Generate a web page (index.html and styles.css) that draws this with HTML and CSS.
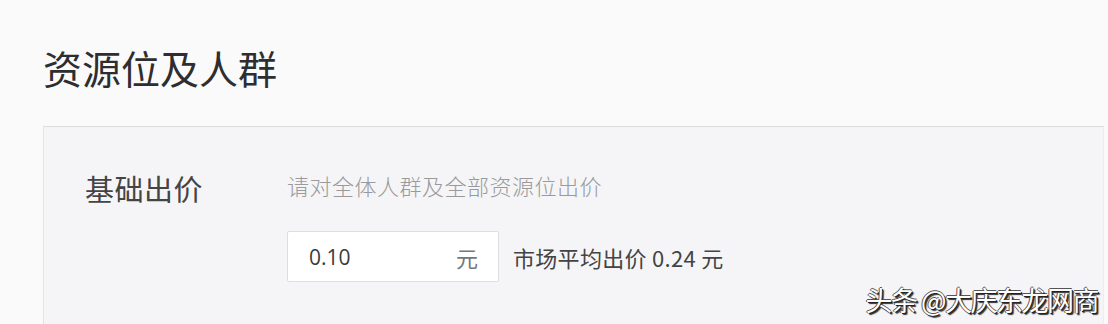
FILE: index.html
```html
<!doctype html>
<html lang="zh-CN">
<head>
    <meta charset="UTF-8">
    <title>资源位及人群</title>
    <link rel="stylesheet" href="styles.css">
</head>
<body>
    <div class="page">
        <h1 class="title">资源位及人群</h1>

        <div class="panel">
            <div class="row">
                <div class="label">基础出价</div>
                <div class="content">
                    <p class="hint">请对全体人群及全部资源位出价</p>
                    <div class="bid">
                        <div class="input">
                            <span class="value">0.10</span>
                            <span class="unit">元</span>
                        </div>
                        <span class="avg">市场平均出价 0.24 元</span>
                    </div>
                </div>
            </div>
        </div>
    </div>

    <div class="watermark">头条 @大庆东龙网商</div>
</body>
</html>
```

FILE: styles.css
```css
html, body {
    margin: 0;
    padding: 0;
    height: 100%;
    overflow: hidden;
}
body {
    background: #fbfafb;
    font-family: "Noto Sans CJK SC", "Open Sans", sans-serif;
    color: #333;
}
.page {
    padding: 0 4px 0 43px;
}
.title {
    margin: 0;
    padding-top: 41px;
    height: 126px;
    box-sizing: border-box;
    font-size: 39px;
    font-weight: 400;
    line-height: 52px;
    color: #2e2e30;
}
.panel {
    border-top: 1px solid #dcdcde;
    border-left: 1px solid #e4e4e6;
    border-right: 1px solid #ededf0;
    background: #f5f5f7;
    height: 198px;
    box-sizing: border-box;
}
.row {
    display: flex;
    padding: 40px 0 0 41px;
}
.label {
    width: 202px;
    font-size: 29px;
    line-height: 42px;
    letter-spacing: 0.5px;
    color: #444;
}
.content {
    display: flex;
    flex-direction: column;
}
.hint {
    margin: 0;
    font-size: 22px;
    font-weight: 300;
    line-height: 36px;
    color: #9a9a9c;
    letter-spacing: 0.5px;
}
.bid {
    display: flex;
    align-items: center;
    margin-top: 28px;
}
.input {
    display: flex;
    justify-content: space-between;
    align-items: center;
    width: 212px;
    height: 51px;
    box-sizing: border-box;
    padding: 0 20px 0 21px;
    background: #fff;
    border: 1px solid #dedee0;
    border-radius: 2px;
}
.value {
    font-family: "Open Sans", sans-serif;
    font-size: 21px;
    color: #3a3a3c;
}
.unit {
    font-size: 22px;
    color: #777;
}
.avg {
    margin-left: 14px;
    font-size: 22px;
    letter-spacing: 0.3px;
    color: #444;
}
.watermark {
    position: absolute;
    right: 10px;
    bottom: 6px;
    font-size: 27px;
    line-height: 36px;
    color: #fff;
    letter-spacing: -1.5px;
    text-shadow: 1px 1px 0 #222, -1px 0 0 #555, 0 -1px 0 #555, 2px 2px 1px #333;
}
```
